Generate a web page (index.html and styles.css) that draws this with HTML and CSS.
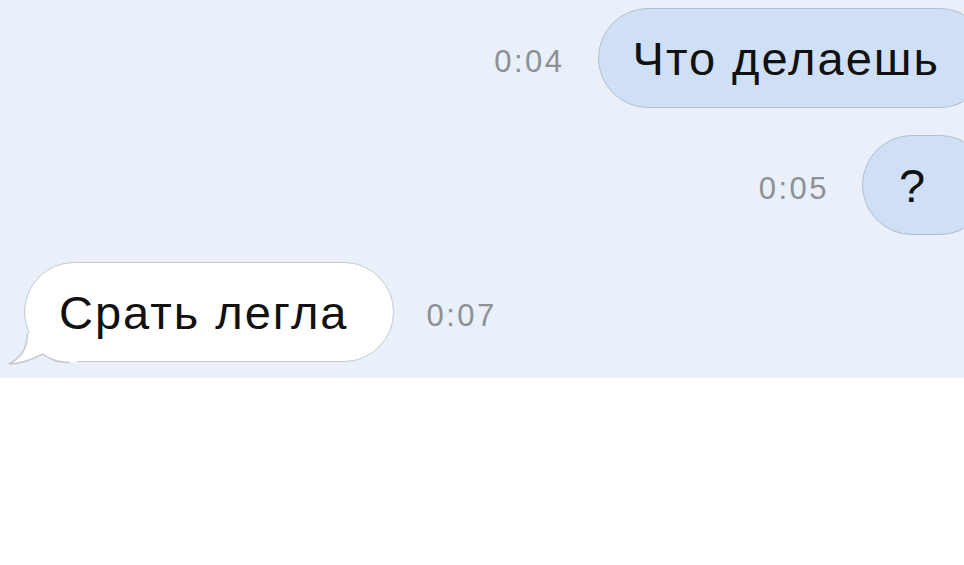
FILE: index.html
```html
<!doctype html>
<html>
<head>
<meta charset="utf-8">
<title>Чат</title>
<link rel="stylesheet" href="styles.css">
</head>
<body>
<div class="chat">
  <div class="row row-out">
    <span class="time">0:04</span>
    <div class="bubble bubble-out"><span class="text">Что делаешь</span></div>
  </div>
  <div class="row row-out">
    <span class="time">0:05</span>
    <div class="bubble bubble-out bubble-short"><span class="text">?</span></div>
  </div>
  <div class="row row-in">
    <div class="bubble bubble-in">
      <span class="text">Срать легла</span>
      <svg class="tail" width="70" height="54" viewBox="0 0 70 54">
        <path d="M20.5 20 C20 38 13 45 2 51 C13 51 26 46 36 41 C42 45 48 49.5 63 49.5 L70 49.5 L70 20 Z" fill="#fff"/>
        <path d="M20.5 20 C20 38 13 45 2 51 C13 51 26 46 36 41 C42 45 48 49.5 63 49.5" fill="none" stroke="#c6cad0" stroke-width="1.5"/>
      </svg>
    </div>
    <span class="time">0:07</span>
  </div>
</div>
</body>
</html>
```

FILE: styles.css
```css
body {
  margin: 0;
  overflow: hidden;
  background: #fff;
  font-family: "Liberation Sans", Arial, sans-serif;
}
.chat {
  background: #e9f0f9;
  padding: 8px 0 16px;
  display: flex;
  flex-direction: column;
  gap: 27px;
}
.row {
  display: flex;
  align-items: center;
  gap: 33px;
  height: 100px;
}
.row-out {
  justify-content: flex-end;
  margin-right: -26px;
}
.row-in {
  padding-left: 24px;
}
.bubble {
  position: relative;
  box-sizing: border-box;
  height: 100px;
  border-radius: 50px;
  display: flex;
  align-items: center;
  font-size: 47px;
  letter-spacing: 2px;
  color: #111;
  white-space: nowrap;
}
.text {
  position: relative;
  z-index: 1;
}
.bubble-out {
  background: #cfe0f6;
  border: 1.5px solid #b3bfcc;
  padding: 0 49px 0 34px;
}
.bubble-short {
  width: 128px;
  padding-left: 36px;
}
.bubble-in {
  background: #fff;
  border: 1.5px solid #c6cad0;
  padding: 0 44px 0 34px;
}
.tail {
  position: absolute;
  left: -18px;
  top: 50px;
  overflow: visible;
}
.time {
  font-size: 31px;
  letter-spacing: 2.5px;
  color: #8c9197;
  padding-top: 8px;
}
```
